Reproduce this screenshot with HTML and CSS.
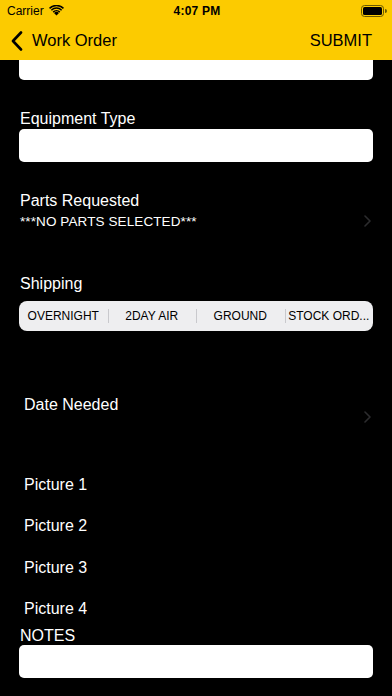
FILE: index.html
```html
<!DOCTYPE html>
<html>
<head>
<meta charset="utf-8">
<link rel="stylesheet" href="styles.css">
</head>
<body>
<header class="header">
  <div class="statusbar">
    <div class="sb-left">
      <span class="carrier">Carrier</span>
      <svg class="wifi" width="15" height="11" viewBox="0 0 14 10">
        <path d="M7 9.6 L4.7 7.3 A3.2 3.2 0 0 1 9.3 7.3 Z" fill="#000"/>
        <path d="M3.4 6.0 A5.1 5.1 0 0 1 10.6 6.0 L9.6 7 A3.7 3.7 0 0 0 4.4 7 Z" fill="#000"/>
        <path d="M1.7 4.2 A7.5 7.5 0 0 1 12.3 4.2 L11.3 5.2 A6.1 6.1 0 0 0 2.7 5.2 Z" fill="#000"/>
        <path d="M0 2.5 A9.9 9.9 0 0 1 14 2.5 L13 3.5 A8.5 8.5 0 0 0 1 3.5 Z" fill="#000"/>
      </svg>
    </div>
    <div class="time">4:07 PM</div>
    <div class="sb-right">
      <svg width="26" height="12" viewBox="0 0 26 12">
        <rect x="0.5" y="0.5" width="22" height="11" rx="3" fill="none" stroke="#6b5a00" stroke-width="1"/>
        <rect x="2" y="2" width="19" height="8" rx="1.6" fill="#000"/>
        <path d="M24 4 v4 a1.5 1.5 0 0 0 0-4z" fill="#6b5a00"/>
      </svg>
    </div>
  </div>
  <nav class="navbar">
    <div class="back">
      <svg width="12" height="20" viewBox="0 0 12 20"><path d="M10 1.5 L2 10 L10 18.5" fill="none" stroke="#000" stroke-width="2.6" stroke-linecap="round" stroke-linejoin="round"/></svg>
      <span>Work Order</span>
    </div>
    <span class="submit">SUBMIT</span>
  </nav>
</header>

<main class="content">
  <div class="field field-cut"></div>

  <div class="label l-equip">Equipment Type</div>
  <div class="field"></div>

  <div class="label l-parts">Parts Requested</div>
  <div class="row-chevron">
    <span class="sub">***NO PARTS SELECTED***</span>
    <svg class="chev" width="7" height="12" viewBox="0 0 7 12"><path d="M1 1 L6 6 L1 11" fill="none" stroke="#2c2c2e" stroke-width="1.6" stroke-linecap="round" stroke-linejoin="round"/></svg>
  </div>

  <div class="label l-ship">Shipping</div>
  <div class="segmented">
    <div class="seg">OVERNIGHT</div>
    <div class="seg">2DAY AIR</div>
    <div class="seg">GROUND</div>
    <div class="seg">STOCK ORD...</div>
  </div>

  <div class="date-row">
    <span class="item">Date Needed</span>
    <svg class="chev chev-date" width="7" height="12" viewBox="0 0 7 12"><path d="M1 1 L6 6 L1 11" fill="none" stroke="#2c2c2e" stroke-width="1.6" stroke-linecap="round" stroke-linejoin="round"/></svg>
  </div>

  <div class="pictures">
    <div class="item pic">Picture 1</div>
    <div class="item pic">Picture 2</div>
    <div class="item pic">Picture 3</div>
    <div class="item pic">Picture 4</div>
  </div>

  <div class="label l-notes">NOTES</div>
  <div class="field"></div>
</main>
</body>
</html>
```
FILE: styles.css
```css
* { box-sizing: border-box; }
html, body {
  margin: 0;
  padding: 0;
  background: #000;
  width: 392px;
  height: 696px;
  overflow: hidden;
  font-family: "Liberation Sans", Arial, sans-serif;
  color: #fff;
}
.header {
  background: #fccb00;
  height: 60px;
  color: #000;
}
.statusbar {
  height: 21px;
  display: flex;
  align-items: center;
  justify-content: space-between;
  padding: 0 5px 0 7px;
}
.sb-left { display: flex; align-items: center; gap: 5px; width: 80px; }
.carrier { font-size: 12px; }
.wifi { margin-top: -1px; }
.time {
  font-size: 12px;
  font-weight: bold;
  letter-spacing: 0.2px;
}
.sb-right { width: 80px; display: flex; justify-content: flex-end; }
.navbar {
  height: 39px;
  display: flex;
  align-items: center;
  justify-content: space-between;
  padding: 0 20px 0 11px;
}
.back {
  display: flex;
  align-items: center;
  gap: 9px;
  font-size: 16.5px;
}
.submit { font-size: 16.5px; }

.content {
  padding: 0 19px;
  display: flex;
  flex-direction: column;
}
.field {
  background: #fff;
  height: 33px;
  border-radius: 5px;
}
.field-cut {
  height: 20px;
  border-radius: 0 0 5px 5px;
}
.label {
  font-size: 16px;
  line-height: 20px;
  padding-left: 1px;
}
.l-equip { margin-top: 29px; height: 20px; }
.l-parts { margin-top: 29px; }
.row-chevron {
  display: flex;
  align-items: center;
  justify-content: space-between;
  height: 20px;
  padding-left: 1px;
}
.sub { font-size: 13.5px; letter-spacing: 0.1px; }
.chev { margin-right: 2px; }
.l-ship { margin-top: 43px; }
.segmented {
  margin-top: 7px;
  height: 30px;
  background: #eeeef0;
  border-radius: 8px;
  display: grid;
  grid-template-columns: repeat(4, 1fr);
  align-items: center;
  color: #000;
}
.seg {
  font-size: 12px;
  text-align: center;
  white-space: nowrap;
  position: relative;
  line-height: 30px;
}
.seg + .seg::before {
  content: "";
  position: absolute;
  left: 0;
  top: 8px;
  height: 14px;
  width: 1px;
  background: #c9c9cd;
}
.date-row {
  margin-top: 64px;
  display: flex;
  justify-content: space-between;
  height: 28px;
  padding-left: 5px;
}
.item { font-size: 16px; line-height: 20px; }
.chev-date { align-self: flex-end; }
.pictures {
  margin-top: 52px;
  display: flex;
  flex-direction: column;
  padding-left: 5px;
}
.pic { height: 41.3px; line-height: 20px; }
.pictures .pic:last-child { height: 20px; }
.l-notes { margin-top: 8px; line-height: 18px; height: 18px; }
```
